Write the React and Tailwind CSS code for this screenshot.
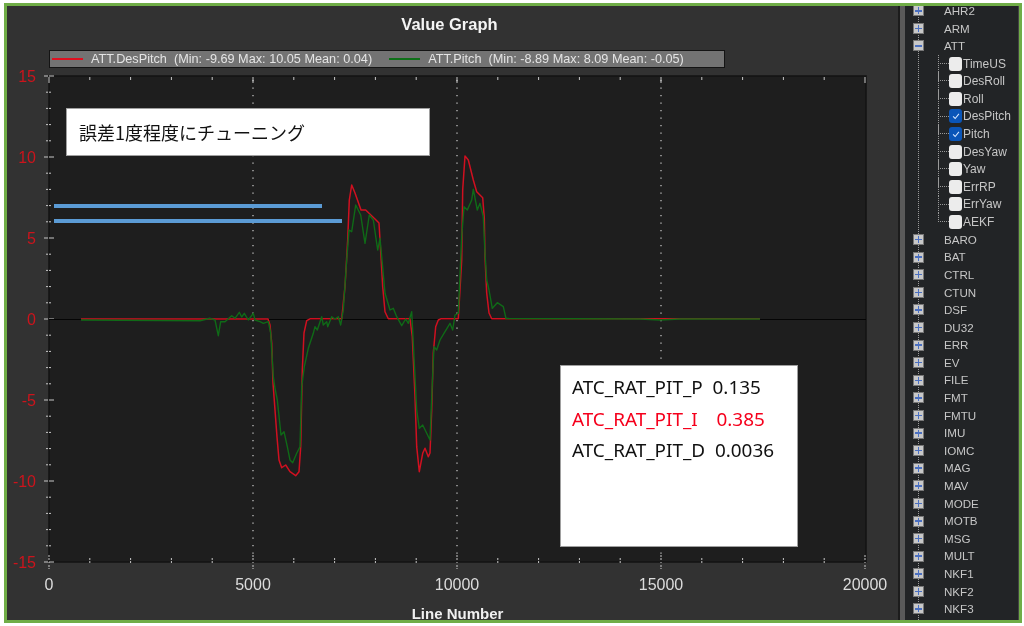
const redPts = "81,319 268,319 270,325 271.7,343 273,383 277,437 279,460 281.7,467.7 285.7,465 290,471.7 295.7,475.7 299,471.7 300.7,446.7 302.3,370 304,333 306.7,320.7 310,318.8 341.7,318.8 345,286.7 347.7,240 349.3,200 351.7,185 355,193 361,210 365.7,210 375,219 379,223 381,256.7 382.7,286.7 385,311.7 388.3,318.8 410,318.8 412.3,336.7 415,396.7 416.7,446.7 419.3,471.7 422.7,453.3 425,448.3 428.3,456.7 430,453 431.7,410 433.3,353 435.7,326.7 438.3,320 440.7,318.8 458.3,318.8 461.7,260 462.7,190 465,156 468.3,160 473.3,180 476.7,191.7 482.7,197.7 484.3,218 485,256.7 486.7,293 489,313 491.7,318.8 760,318.8";
const greenPts = "81,320 200,320.7 210,318.3 215,320 218.3,335.7 220.7,321.7 225,321.7 231.7,315.7 235,318.3 239.3,312.3 241.7,317 244.3,313.3 248.3,320 253.3,313.3 255,320 260,321.7 263.3,323.3 268.3,321.7 270.7,333 273.3,376.7 275,388.3 277.3,400 281,435 284,431.7 287.3,446.7 290,460 292.7,462.7 296.7,453.3 300,446.7 301.7,386.7 304.3,366.7 308.3,348.3 313.3,333.3 315,326.7 317.3,330 321.7,316.7 323.3,325 326.7,321.7 327.7,326.7 331.7,316.7 335,319 338.3,316.7 340.7,325 343.3,310 346.7,260 349,230 351.7,231.7 355.7,205 360.7,215 365,243.3 369.3,215 373.3,220 377.7,250 380,238.3 382.3,263.3 385,293.3 390,310 393.3,308.3 396.7,316.7 401.7,325.7 405.7,319 408.3,323.3 411.7,311.7 413.3,343.3 416.7,410 419.3,428.3 422.7,425 426.7,433.3 430,440 432.3,383.3 434,346.7 436.7,350 440,340 445,331.7 450,323.3 452.7,330 455,315 458.3,313.3 461.7,236.7 464,206.7 467.3,210 471.7,200 473.3,189.3 477.3,210 480,203.3 483.3,216.7 485,253 486.7,280 489,290 492.3,308.3 497.3,302.7 503.3,306.7 506,318.5 640,319 660,320 680,319 760,319";

const yLabels = [[15, 76], [10, 157], [5, 238], [0, 319], [-5, 400], [-10, 481], [-15, 562]];
const xLabels = [[0, 49], [5000, 253], [10000, 457], [15000, 661], [20000, 865]];

function Chart() {
  const yMinor = Array.from({ length: 31 }, (_, i) => 76 + i * 16.2);
  const xMinor = Array.from({ length: 21 }, (_, i) => 49 + i * 40.8);
  return (
    <svg viewBox="7 68 891 552" className="block w-[891px] h-[552px]">
      <rect x="49" y="76" width="817" height="486" fill="#1e1e1e" stroke="#131313" strokeWidth="1.5" />
      {[253, 457, 661].map((x) => (
        <line key={x} x1={x} x2={x} y1="80" y2="558" stroke="#c0c0c0" strokeWidth="1.3" strokeDasharray="1.3 6.2" />
      ))}
      {yMinor.map((y, i) => (
        <line key={i} x1={i % 5 === 0 ? 44 : 46} x2={i % 5 === 0 ? 54 : 52} y1={y} y2={y} stroke="#c8c8c8" strokeWidth="1" strokeDasharray={i % 5 === 0 ? "4 1 5" : "2 1 2"} />
      ))}
      {xMinor.map((x, i) => (
        <g key={i}>
          <line x1={x} x2={x} y1="77" y2={i % 5 === 0 ? 83 : 80} stroke="#c8c8c8" strokeWidth="1" />
          <line x1={x} x2={x} y1={i % 5 === 0 ? 555 : 558} y2={i % 5 === 0 ? 569 : 565} stroke="#c8c8c8" strokeWidth="1" strokeDasharray="2 1 2" />
        </g>
      ))}
      <line x1="49" x2="866" y1="319.5" y2="319.5" stroke="#050505" strokeWidth="1.2" />
      <polyline points={redPts} fill="none" stroke="#d01020" strokeWidth="1.5" strokeLinejoin="round" />
      <polyline points={greenPts} fill="none" stroke="#0f6a17" strokeWidth="1.4" strokeLinejoin="round" />
      {yLabels.map(([v, y]) => (
        <text key={v} x="36" y={y + 5.5} textAnchor="end" fill="#cc141c" fontSize="16" fontFamily="'Liberation Sans', sans-serif">{v}</text>
      ))}
      {xLabels.map(([v, x]) => (
        <text key={v} x={x} y="590" textAnchor="middle" fill="#dcdcdc" fontSize="16" fontFamily="'Liberation Sans', sans-serif">{v}</text>
      ))}
      <text x="457.5" y="618.5" textAnchor="middle" fill="#f0f0f0" fontSize="15" fontWeight="700" fontFamily="'Liberation Sans', sans-serif">Line Number</text>
    </svg>
  );
}

function PlusBox({ minus }) {
  return (
    <span className="relative z-10 flex h-[11px] w-[11px] items-center justify-center border border-[#777] bg-[#c8c8c8]">
      <span className="absolute h-[1.5px] w-[7px] bg-[#4a6fc0]" />
      {!minus && <span className="absolute h-[7px] w-[1.5px] bg-[#4a6fc0]" />}
    </span>
  );
}

function TopRow({ name, minus }) {
  return (
    <div className="flex h-[17.6px] items-center">
      <div className="flex w-[26px] justify-center pl-[1px]"><PlusBox minus={minus} /></div>
      <span className="ml-[13px] text-[11.6px] leading-none text-[#c6c6c6]">{name}</span>
    </div>
  );
}

function ChildRow({ name, checked, last }) {
  return (
    <div className="flex h-[17.6px] items-stretch">
      <div className="relative ml-[33px] w-[11px]">
        <div className="absolute left-0 top-0 h-[9px] w-full border-b border-l border-dotted border-[#9a9a9a]" />
        {!last && <div className="absolute left-0 top-0 bottom-0 border-l border-dotted border-[#9a9a9a]" />}
      </div>
      <div className="flex items-center">
        <span className={"flex h-[14px] w-[13px] items-center justify-center rounded-[3px] " + (checked ? "bg-[#0a55b8]" : "bg-[#ececec]")}>
          {checked && (
            <svg viewBox="0 0 12 12" className="h-[10px] w-[10px]">
              <path d="M2.5 6.5 L5 9 L9.5 3.5" fill="none" stroke="#d6e6ff" strokeWidth="1.3" />
            </svg>
          )}
        </span>
        <span className="ml-[1px] text-[12px] leading-none text-[#c6c6c6]">{name}</span>
      </div>
    </div>
  );
}

const before = ["AHR2", "ARM"];
const kids = ["TimeUS", "DesRoll", "Roll", "DesPitch", "Pitch", "DesYaw", "Yaw", "ErrRP", "ErrYaw", "AEKF"];
const after = ["BARO", "BAT", "CTRL", "CTUN", "DSF", "DU32", "ERR", "EV", "FILE", "FMT", "FMTU", "IMU", "IOMC", "MAG", "MAV", "MODE", "MOTB", "MSG", "MULT", "NKF1", "NKF2", "NKF3"];

export default function App() {
  return (
    <div className="h-[626px] w-[1024px] overflow-hidden bg-white pb-[3px] pl-[4px] pr-[2px] pt-[3px] font-['Liberation_Sans',sans-serif] blur-[0.35px]">
      <div className="flex h-full border-[3px] border-[#70ad47]">
        <div className="relative flex w-[891px] flex-col bg-[#323232]">
          <div className="flex h-[42px] items-center justify-center pb-[6px] pr-[6px] text-[16.5px] font-bold leading-none text-[#f4f4f4]">Value Graph</div>
          <div className="ml-[42px] mt-[2px] flex h-[18px] w-[676px] items-center border border-[#141414] bg-[#737373] text-[12.7px] leading-none text-[#e4e4e4]">
            <span className="ml-[2px] h-[2px] w-[31px] shrink-0 bg-[#e01020]" />
            <span className="ml-[8px] whitespace-pre">ATT.DesPitch  (Min: -9.69 Max: 10.05 Mean: 0.04)</span>
            <span className="ml-[17px] h-[2px] w-[31px] shrink-0 bg-[#0e7018]" />
            <span className="ml-[8px] whitespace-pre">ATT.Pitch  (Min: -8.89 Max: 8.09 Mean: -0.05)</span>
          </div>
          <Chart />
          <div className="absolute left-[59px] top-[102px] flex h-[48px] w-[364px] items-center border border-[#a0a0a0] bg-white pl-[12px] font-['Noto_Sans_CJK_JP',sans-serif] text-[18px] text-[#111]">
            誤差1度程度にチューニング
          </div>
          <div className="absolute left-[47px] top-[198px] h-[4px] w-[268px] bg-[#5b9bd5]" />
          <div className="absolute left-[47px] top-[213px] h-[4px] w-[288px] bg-[#5b9bd5]" />
          <div className="absolute left-[553px] top-[359px] h-[182px] w-[238px] border border-[#a0a0a0] bg-white pl-[11px] pt-[6px] font-['Noto_Sans',sans-serif] text-[18.9px] leading-[31.5px] text-[#111]">
            <div className="whitespace-pre">ATC_RAT_PIT_P  0.135</div>
            <div className="whitespace-pre text-[#f5001c]">ATC_RAT_PIT_I   <span className="ml-[4px]">0.385</span></div>
            <div className="whitespace-pre">ATC_RAT_PIT_D  0.0036</div>
          </div>
        </div>
        <div className="w-[2px] bg-[#1c1c1c]" />
        <div className="w-[5px] bg-[#5a5a5a]" />
        <div className="relative min-w-0 flex-1 overflow-hidden border-r border-[#444] bg-[#222426]">
          <div className="absolute bottom-0 left-[13px] top-0 border-l border-dotted border-[#9a9a9a]" />
          <div className="relative -mt-[4px]">
            {before.map((n) => <TopRow key={n} name={n} />)}
            <TopRow name="ATT" minus />
            {kids.map((n, i) => (
              <ChildRow key={n} name={n} checked={n === "DesPitch" || n === "Pitch"} last={i === kids.length - 1} />
            ))}
            {after.map((n) => <TopRow key={n} name={n} />)}
          </div>
        </div>
      </div>
    </div>
  );
}
